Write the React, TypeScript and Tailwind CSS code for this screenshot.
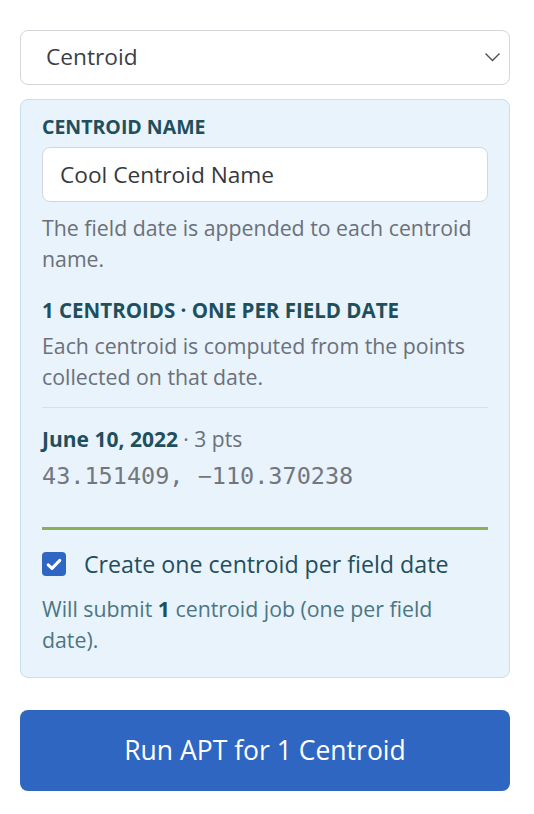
import { useState } from 'react';

const sans = { fontFamily: '"Open Sans", "Noto Sans", sans-serif' };

export default function App() {
  const [name, setName] = useState('Cool Centroid Name');
  const [perDate, setPerDate] = useState(true);

  return (
    <div className="bg-white min-h-[814px] pl-5 pr-6 pt-[30px]" style={sans}>
      {/* mode select */}
      <div className="relative">
        <select
          className="w-full h-[55px] appearance-none rounded-lg border border-[#d3d7dc] bg-white pl-[25px] pr-10 text-[22.7px] text-[#3a3f45] outline-none"
          defaultValue="centroid"
        >
          <option value="centroid">Centroid</option>
          <option value="points">Points</option>
        </select>
        <svg
          className="pointer-events-none absolute right-[9px] top-[22px]"
          width="17"
          height="10"
          viewBox="0 0 17 10"
          fill="none"
        >
          <path d="M1.5 1.5 8.5 8.5 15.5 1.5" stroke="#4b5158" strokeWidth="1.4" />
        </svg>
      </div>

      {/* settings panel */}
      <div className="mt-[14px] rounded-lg border border-[#c6e1ea] bg-[#e8f3fc] px-[21px] pt-[15px] pb-[22px]">
        <div className="text-[19.5px] leading-6 font-bold uppercase text-[#1f4f5c]">Centroid Name</div>
        <input
          className="mt-2 w-full h-[55px] rounded-lg border border-[#d3d7dc] bg-white px-[17px] text-[22.7px] text-[#34383d] outline-none"
          value={name}
          onChange={(e) => setName(e.target.value)}
        />
        <p className="mt-[10px] text-[21.3px] leading-[31px] text-[#6b7079]">
          The field date is appended to each centroid name.
        </p>

        <div className="mt-[24px] text-[20.5px] leading-6 font-bold uppercase text-[#1f4f5c]">
          1 Centroids · One per field date
        </div>
        <p className="mt-[8px] text-[21.3px] leading-[31px] text-[#6b7079]">
          Each centroid is computed from the points collected on that date.
        </p>

        <div className="mt-[15px] border-t border-[#d5e1e9] pt-[17px]">
          <div className="text-[21px] leading-[28px] text-[#6b7079]">
            <span className="font-bold text-[#1f4f5c]">June 10, 2022</span> · 3 pts
          </div>
          <div
            className="mt-[9px] text-[23.5px] leading-[28px] text-[#72777f]"
            style={{ fontFamily: '"DejaVu Sans Mono", monospace' }}
          >
            43.151409, −110.370238
          </div>
        </div>

        <div className="mt-[37px] h-[3px] bg-[#8bae59]" />

        <label className="mt-[20px] flex h-7 items-center gap-[18px] cursor-pointer">
          <span
            className={`flex h-[24px] w-[24px] items-center justify-center rounded-[4px] ${perDate ? 'bg-[#2f66c3]' : 'bg-white border border-[#9aa3ad]'}`}
          >
            {perDate && (
              <svg width="16" height="13" viewBox="0 0 16 13" fill="none">
                <path d="M2.2 6.8 6 10.4 13.8 2.4" stroke="white" strokeWidth="3" strokeLinecap="round" strokeLinejoin="round" />
              </svg>
            )}
          </span>
          <input
            type="checkbox"
            className="hidden"
            checked={perDate}
            onChange={(e) => setPerDate(e.target.checked)}
          />
          <span className="text-[23.2px] leading-7 text-[#1f4f5c]">Create one centroid per field date</span>
        </label>
        <p className="mt-[15px] text-[21.3px] leading-[31px] text-[#4c7682]">
          Will submit <strong className="font-bold text-[#1f4f5c]">1</strong> centroid job (one per field date).
        </p>
      </div>

      <button className="mt-[32px] w-full h-[81px] rounded-lg bg-[#2f66c2] text-[26.5px] text-white">
        Run APT for 1 Centroid
      </button>
    </div>
  );
}
